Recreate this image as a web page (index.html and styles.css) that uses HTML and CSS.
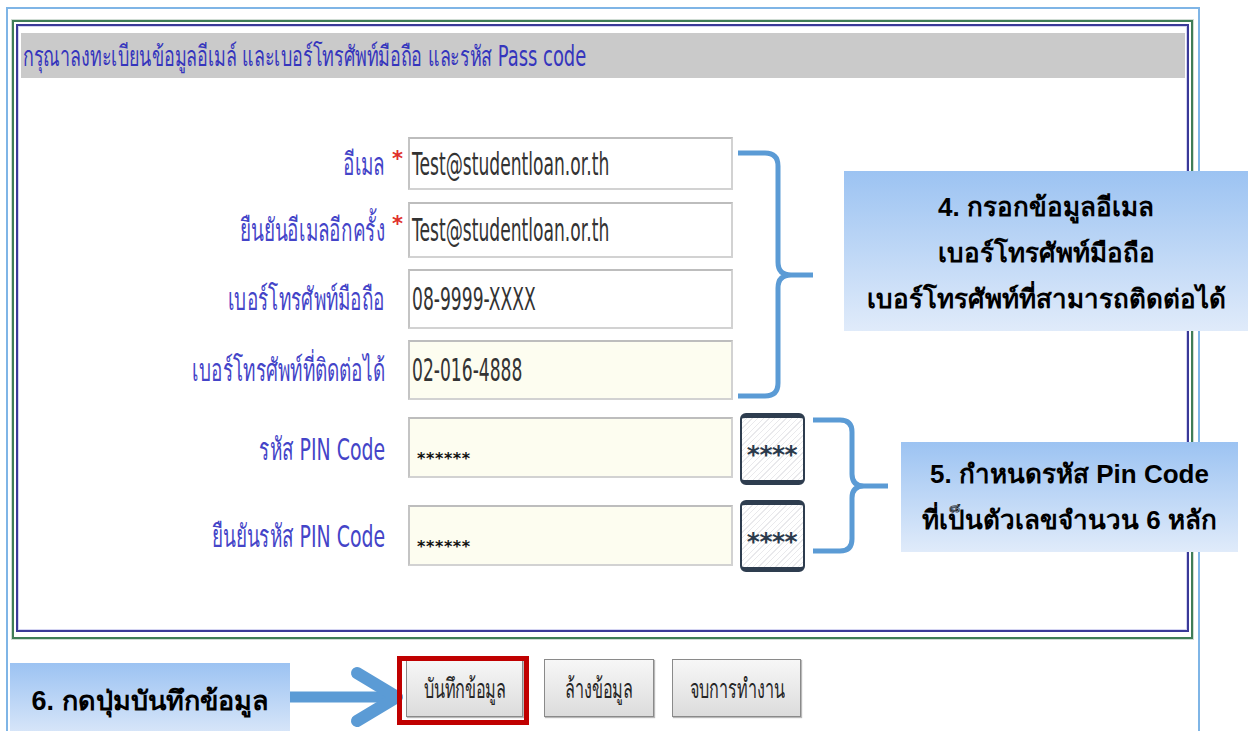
FILE: index.html
```html
<!DOCTYPE html>
<html lang="th">
<head>
<meta charset="utf-8">
<title>ลงทะเบียนข้อมูลติดต่อ</title>
<link rel="stylesheet" href="styles.css">
</head>
<body>
<div class="page">
  <div class="frame">
    <div class="panel">
      <div class="panel-inner">
        <div class="title"><span class="cx">กรุณาลงทะเบียนข้อมูลอีเมล์ และเบอร์โทรศัพท์มือถือ และรหัส Pass code</span></div>
        <div class="form">
          <div class="row r1">
            <div class="lbl"><span class="cx">อีเมล</span></div>
            <div class="req">*</div>
            <div class="field"><span class="cx">Test@studentloan.or.th</span></div>
          </div>
          <div class="row r2">
            <div class="lbl"><span class="cx">ยืนยันอีเมลอีกครั้ง</span></div>
            <div class="req">*</div>
            <div class="field"><span class="cx">Test@studentloan.or.th</span></div>
          </div>
          <div class="row r3">
            <div class="lbl"><span class="cx">เบอร์โทรศัพท์มือถือ</span></div>
            <div class="req"></div>
            <div class="field"><span class="cx">08-9999-XXXX</span></div>
          </div>
          <div class="row r4">
            <div class="lbl"><span class="cx">เบอร์โทรศัพท์ที่ติดต่อได้</span></div>
            <div class="req"></div>
            <div class="field cream"><span class="cx">02-016-4888</span></div>
          </div>
          <div class="row r5">
            <div class="lbl"><span class="cx">รหัส PIN Code</span></div>
            <div class="req"></div>
            <div class="field cream pin"><span class="dots">******</span></div>
            <div class="pinbtn"><span>****</span></div>
          </div>
          <div class="row r6">
            <div class="lbl"><span class="cx">ยืนยันรหัส PIN Code</span></div>
            <div class="req"></div>
            <div class="field cream pin"><span class="dots">******</span></div>
            <div class="pinbtn"><span>****</span></div>
          </div>
        </div>
      </div>
    </div>
    <div class="actions">
      <button class="btn b-save"><span class="cx">บันทึกข้อมูล</span></button>
      <button class="btn b-clear"><span class="cx">ล้างข้อมูล</span></button>
      <button class="btn b-end"><span class="cx">จบการทำงาน</span></button>
    </div>
  </div>

  <!-- annotation layer: braces and arrow -->
  <svg class="notes" width="1251" height="731" viewBox="0 0 1251 731">
    <g fill="none" stroke="#5b9bd5" stroke-width="5" stroke-linecap="butt">
      <path d="M738,153 H765 Q778,153 778,166 V262 Q778,275 791,275 H813 M791,275 Q778,275 778,288 V383 Q778,396 765,396 H738"/>
      <path d="M813,420 H840 Q852,420 852,432 V474 Q852,486 864,486 H888 M864,486 Q852,486 852,498 V539 Q852,551 840,551 H813"/>
    </g>
    <g stroke="#5b9bd5" fill="none" stroke-linecap="round" stroke-linejoin="round">
      <line x1="290" y1="697" x2="392" y2="697" stroke-width="11" stroke-linecap="butt"/>
      <polyline points="357,673 397,697 357,721" stroke-width="12"/>
    </g>
  </svg>

  <div class="callout c4">
    <div>4. กรอกข้อมูลอีเมล</div>
    <div>เบอร์โทรศัพท์มือถือ</div>
    <div>เบอร์โทรศัพท์ที่สามารถติดต่อได้</div>
  </div>
  <div class="callout c5">
    <div>5. กำหนดรหัส Pin Code</div>
    <div>ที่เป็นตัวเลขจำนวน 6 หลัก</div>
  </div>
  <div class="callout c6">
    <div>6. กดปุ่มบันทึกข้อมูล</div>
  </div>
  <div class="mark"></div>
</div>
</body>
</html>
```

FILE: styles.css
```css
* { box-sizing: border-box; }

body {
  margin: 0;
  background: #ffffff;
  font-family: Tahoma, "DejaVu Sans", "Noto Sans", sans-serif;
}

.page {
  position: relative;
  width: 1251px;
  height: 731px;
  overflow: hidden;
}

/* narrow rendering of the form text */
.cx {
  display: inline-block;
  white-space: nowrap;
  transform: scaleX(var(--sx, 0.62));
  transform-origin: left center;
}

.frame {
  margin: 7px 0 0 6px;
  width: 1194px;
  height: 740px;
  border: 2px solid #7fb5e6;
  border-bottom: 0;
  padding: 11px 5px 0 4px;
}

.panel {
  border: 2px solid #3f7d57;
  box-shadow: 0 0 0 1px #cfdcd3;
  padding: 2px 2px 5px 2px;
}

.panel-inner {
  border: 2px solid #3a3a98;
  box-shadow: inset 0 0 0 1px #d4d4f2;
  padding: 7px 2px 58px 3px;
}

.title {
  height: 45px;
  background: #cacaca;
  display: flex;
  align-items: center;
  padding: 1px 0 0 2px;
  color: #3535bd;
  font-size: 28px;
  --sx: 0.64;
}

.form {
  padding-top: 59px;
}

.row {
  display: flex;
  align-items: center;
}

.r1 { height: 53px; }
.r2 { height: 56px; margin-top: 12px; }
.r3 { height: 60px; margin-top: 11px; }
.r4 { height: 60px; margin-top: 11px; }
.r5 { height: 72px; margin-top: 13px; }
.r6 { height: 72px; margin-top: 15px; }

.lbl {
  width: 364px;
  text-align: right;
  color: #4444c8;
  font-size: 31px;
  --sx: 0.61;
}

.lbl .cx { transform-origin: right center; }

.req {
  width: 23px;
  align-self: flex-start;
  padding: 10px 0 0 7px;
  color: #e0302a;
  font-size: 21px;
  font-weight: bold;
}

.field {
  width: 325px;
  height: 100%;
  display: flex;
  align-items: center;
  padding-left: 2px;
  background: #ffffff;
  border: 2px solid #d2d2d2;
  border-top-color: #bdbdbd;
  border-left-color: #c4c4c4;
  color: #333333;
  font-size: 32px;
  --sx: 0.535;
}

.field.cream { background: #fdfdf0; }

.r5 .field { height: 61px; align-self: flex-start; margin-top: 4px; }
.r6 .field { height: 61px; align-self: flex-start; margin-top: 5px; }

.field.pin {
  align-items: flex-end;
  padding: 0 0 9px 7px;
}

.dots {
  font-family: "DejaVu Sans", sans-serif;
  font-size: 16px;
  font-weight: bold;
  letter-spacing: 0.6px;
  color: #111;
  line-height: 1;
}

.pinbtn {
  margin-left: 7px;
  width: 65px;
  height: 72px;
  display: flex;
  align-items: center;
  justify-content: center;
  border: 2px solid #2e3d4f;
  border-top-width: 5px;
  border-bottom-width: 5px;
  border-radius: 6px;
  background: repeating-linear-gradient(135deg, #ffffff 0 3px, #e9e9ec 3px 4px);
  color: #2b3a4c;
  font-family: "DejaVu Sans", sans-serif;
  font-weight: bold;
  font-size: 25px;
  letter-spacing: -0.5px;
  line-height: 1;
}

.pinbtn span { padding: 11px 1px 0 0; }

.actions {
  display: flex;
  margin: 20px 0 0 394px;
}

.btn {
  height: 58px;
  padding: 0;
  border: 1px solid #8a8a8a;
  background: linear-gradient(#f7f7f7, #dcdcdc);
  box-shadow: 1px 1px 1px #b9b9b9;
  color: #262626;
  font-family: Tahoma, "DejaVu Sans", sans-serif;
  font-size: 27px;
  display: flex;
  align-items: center;
  justify-content: center;
  --sx: 0.6;
}

.btn .cx { transform-origin: center center; }

.b-save { width: 117px; }
.b-clear { width: 110px; margin-left: 21px; }
.b-end { width: 129px; margin-left: 18px; }

/* annotation layer */
.notes {
  position: absolute;
  left: 0;
  top: 0;
  pointer-events: none;
}

.callout {
  position: absolute;
  display: flex;
  flex-direction: column;
  align-items: center;
  justify-content: center;
  background: linear-gradient(#9cc3f2, #e0ebfa);
  color: #000;
  font-family: "Liberation Sans", "DejaVu Sans", sans-serif;
  font-weight: bold;
  font-size: 26px;
  line-height: 46px;
}

.c4 { left: 844px; top: 171px; width: 404px; height: 160px; padding-top: 4px; }
.c5 { left: 901px; top: 442px; width: 337px; height: 110px; }
.c6 { left: 10px; top: 663px; width: 280px; height: 80px; padding-bottom: 4px; font-size: 27px; }

.mark {
  position: absolute;
  left: 397px;
  top: 656px;
  width: 132px;
  height: 69px;
  border: 5px solid #c00000;
}
```
